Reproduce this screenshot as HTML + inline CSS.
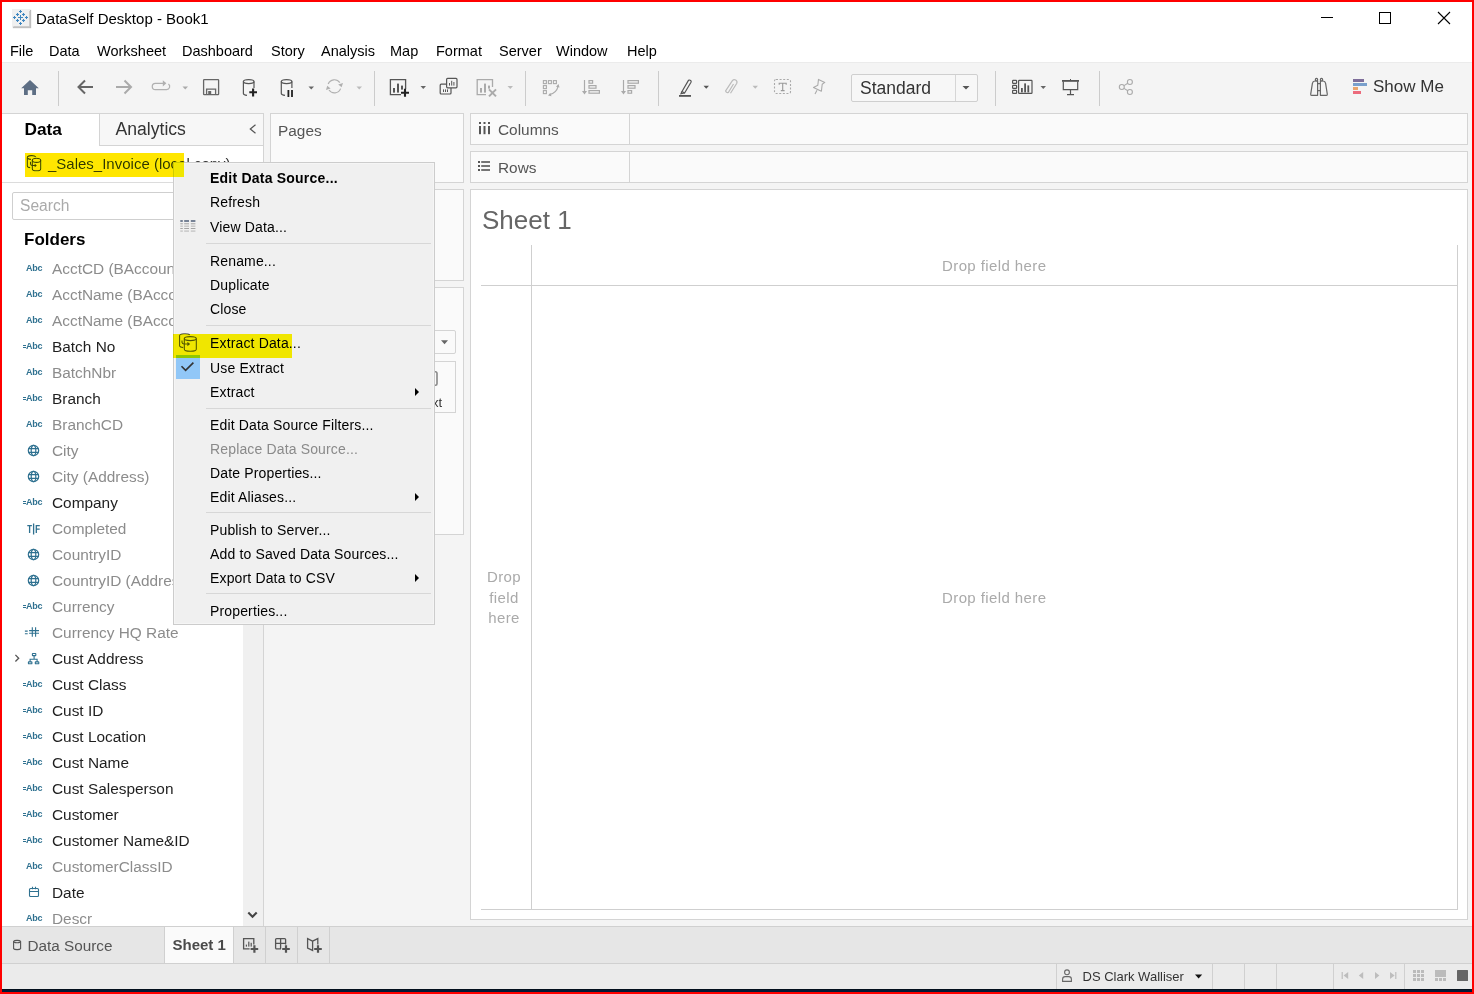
<!DOCTYPE html>
<html><head><meta charset="utf-8">
<style>
*{margin:0;padding:0;box-sizing:border-box}
html,body{width:1474px;height:994px;overflow:hidden;background:#ff0000;font-family:"Liberation Sans",sans-serif}
.a{position:absolute}
.t{position:absolute;white-space:nowrap;line-height:1}
.abc{font-size:9px;font-weight:bold;color:#2f7190;letter-spacing:-0.2px}
.dz{font-size:15px;color:#aaaaaa;letter-spacing:0.4px}
.pn{position:absolute;background:#fafafa;border:1px solid #d4d4d4}
</style></head><body>
<!-- window background -->
<div class="a" style="left:2px;top:2px;width:1470px;height:990px;background:#f4f4f4"></div>
<!-- title + menu -->
<div class="a" style="left:2px;top:2px;width:1470px;height:60px;background:#fff"></div>
<!-- status strip / navy line -->
<div class="a" style="left:2px;top:989px;width:1470px;height:3px;background:#001b37;border-top:1px solid #030f1c"></div>

<!-- TITLEBAR -->
<div class="a" style="left:12px;top:9px;width:18px;height:18px;background:#eeeeee;box-shadow:1px 1px 1px #bbb"></div>
<div class="t" style="left:36px;top:11px;font-size:15px;color:#000">DataSelf Desktop - Book1</div>

<!-- MENU -->
<div class="t" style="left:10px;top:44px;font-size:14.5px;color:#000">File</div>
<div class="t" style="left:49px;top:44px;font-size:14.5px;color:#000">Data</div>
<div class="t" style="left:97px;top:44px;font-size:14.5px;color:#000">Worksheet</div>
<div class="t" style="left:182px;top:44px;font-size:14.5px;color:#000">Dashboard</div>
<div class="t" style="left:271px;top:44px;font-size:14.5px;color:#000">Story</div>
<div class="t" style="left:321px;top:44px;font-size:14.5px;color:#000">Analysis</div>
<div class="t" style="left:390px;top:44px;font-size:14.5px;color:#000">Map</div>
<div class="t" style="left:436px;top:44px;font-size:14.5px;color:#000">Format</div>
<div class="t" style="left:499px;top:44px;font-size:14.5px;color:#000">Server</div>
<div class="t" style="left:556px;top:44px;font-size:14.5px;color:#000">Window</div>
<div class="t" style="left:627px;top:44px;font-size:14.5px;color:#000">Help</div>

<!-- TOOLBAR bg -->
<div class="a" style="left:2px;top:62px;width:1470px;height:52px;background:#f4f4f4;border-top:1px solid #ebebeb"></div>
<!-- Standard dropdown -->
<div class="a" style="left:851px;top:74px;width:127px;height:28px;background:#f7f7f7;border:1px solid #cfcfcf;border-radius:2px"></div>
<div class="a" style="left:955px;top:75px;width:1px;height:26px;background:#d6d6d6"></div>
<div class="t" style="left:860px;top:80px;font-size:17.5px;color:#333">Standard</div>
<div class="t" style="left:1373px;top:78px;font-size:17px;color:#333">Show Me</div>

<!-- TOOLBAR ICONS -->
<svg class="a" style="left:0;top:0" width="1474" height="114" viewBox="0 0 1474 114">
<!-- dividers -->
<g fill="#cccccc">
<rect x="58" y="71" width="1" height="35"/>
<rect x="374" y="71" width="1" height="35"/>
<rect x="525" y="71" width="1" height="35"/>
<rect x="658" y="71" width="1" height="35"/>
<rect x="995" y="71" width="1" height="35"/>
<rect x="1099" y="71" width="1" height="35"/>
</g>
<!-- home -->
<path d="M21.2 88.2L30 80L38.8 88.2H36V95H32.2V90.2H27.8V95H24V88.2Z" fill="#5d6e84"/>
<!-- back -->
<g stroke="#666" stroke-width="2" fill="none"><path d="M78.5 87H93M85 80.5L78.5 87L85 93.5"/></g>
<!-- fwd -->
<g stroke="#aaa" stroke-width="2" fill="none"><path d="M116 87H131M124.5 80.5L131 87L124.5 93.5"/></g>
<!-- redo loop -->
<g stroke="#b0b0b0" stroke-width="1.2" fill="none"><path d="M163 83.3H155.4A3.15 3.15 0 0 0 155.4 89.6H166.6A3.15 3.15 0 0 0 168.4 83.9"/></g><path d="M162.8 80.2L166.4 83.3L162.8 86.5Z" fill="#b0b0b0"/>
<!-- dropdown tris -->
<g fill="#999"><path d="M182.5 86.5h5.5l-2.75 3z" fill="#aaa"/><path d="M308.5 86.5h5.5l-2.75 3z" fill="#666"/><path d="M356.5 86.5h5.5l-2.75 3z" fill="#bbb"/>
<path d="M420.5 86h5.5l-2.75 3z" fill="#666"/><path d="M507.5 86h5.5l-2.75 3z" fill="#bbb"/>
<path d="M703.5 85.8h5.5l-2.75 3z" fill="#555"/><path d="M752.5 85.8h5.5l-2.75 3z" fill="#bbb"/>
<path d="M1040.5 86h5.5l-2.75 3z" fill="#666"/><path d="M962.5 86h7l-3.5 3.6z" fill="#555"/>
</g>
<!-- save -->
<g stroke="#666" stroke-width="1.3" fill="none"><rect x="203.6" y="79.6" width="15" height="15" rx="0.6"/><path d="M206.6 94.6V89.2H215.6V94.6"/></g>
<rect x="208.2" y="91" width="3" height="3.6" fill="#666"/>
<!-- db+ -->
<g stroke="#555" stroke-width="1.2" fill="none"><ellipse cx="248.7" cy="81.6" rx="5.3" ry="2"/><path d="M243.4 81.6V93.4A5.3 2 0 0 0 247 95.3M254 81.6V88"/></g>
<path d="M249.3 92.3H257M253.1 88.4V96.6" stroke="#222" stroke-width="2.1"/>
<!-- db pause -->
<g stroke="#555" stroke-width="1.2" fill="none"><ellipse cx="286.6" cy="81.6" rx="5.3" ry="2"/><path d="M281.3 81.6V93.4A5.3 2 0 0 0 285 95.3M291.9 81.6V88"/></g>
<path d="M288.4 90V97M292 90V97" stroke="#222" stroke-width="1.8"/>
<!-- refresh -->
<g stroke="#b0b0b0" stroke-width="1.2" fill="none"><path d="M328.2 84A6.6 6.6 0 0 1 339.8 82.6"/><path d="M340.6 88.6A6.6 6.6 0 0 1 329 90"/></g>
<g fill="#b0b0b0"><path d="M338.2 84.6L343 83L341.6 87.2Z"/><path d="M326 90L327.2 85.8L330.6 88.4Z"/></g>
<!-- new worksheet -->
<g stroke="#555" stroke-width="1.3" fill="none"><path d="M401 94.6H390.4V79.6H405.6V89"/></g>
<g fill="#555"><rect x="393" y="88" width="2" height="4.6"/><rect x="397" y="83.6" width="2" height="9"/><rect x="401" y="85.6" width="2" height="4"/></g>
<path d="M401 92.8H409M405 88.8V96.8" stroke="#222" stroke-width="2.1"/>
<!-- duplicate -->
<g stroke="#555" stroke-width="1.2" fill="none"><rect x="446.6" y="78.4" width="10.4" height="9.4" rx="1"/><path d="M446 84.2H441.2A1 1 0 0 0 440.2 85.2V93A1 1 0 0 0 441.2 94H450A1 1 0 0 0 451 93V88"/></g>
<g fill="#555"><rect x="449" y="83" width="1" height="2.6"/><rect x="451.2" y="80.8" width="1" height="4.8"/><rect x="453.4" y="82" width="1" height="3.6"/><rect x="443" y="89.4" width="1" height="2.6"/><rect x="445" y="89.4" width="1" height="2.6"/><rect x="447" y="89.4" width="1" height="2.6"/></g>
<!-- clear sheet -->
<g stroke="#aaa" stroke-width="1.3" fill="none"><path d="M486 94.6H477.2V79.6H492.5V87"/></g>
<g fill="#aaa"><rect x="480" y="88" width="2" height="4.6"/><rect x="484" y="83.6" width="2" height="9"/><rect x="488" y="85.6" width="2" height="3"/></g>
<path d="M489 89.4L496 96.4M496 89.4L489 96.4" stroke="#aaa" stroke-width="2"/>
<!-- swap -->
<g stroke="#aaa" stroke-width="1.1" fill="none"><rect x="543.4" y="80.6" width="3" height="3"/><rect x="548.4" y="80.6" width="3" height="3"/><rect x="553.4" y="80.6" width="3" height="3"/><rect x="543.4" y="85.6" width="3" height="3"/><rect x="543.4" y="90.6" width="3" height="3"/><path d="M549.5 94.6Q556.5 93 558 86.6"/></g>
<g fill="#aaa"><path d="M556 86.8L558.5 84L559.5 87.5Z"/><path d="M550.3 93L548 95.6L551.5 96.2Z"/></g>
<!-- sort asc -->
<g stroke="#aaa" stroke-width="1.2" fill="none"><path d="M584.5 80V93"/><rect x="589" y="80.6" width="3.6" height="2.6"/><rect x="589" y="85.6" width="7" height="2.6"/><rect x="589" y="90.6" width="10.4" height="2.6"/></g>
<path d="M582 91L584.5 94.5L587 91Z" fill="#aaa"/>
<!-- sort desc -->
<g stroke="#aaa" stroke-width="1.2" fill="none"><path d="M623.5 80V93"/><rect x="628" y="80.6" width="10.4" height="2.6"/><rect x="628" y="85.6" width="7" height="2.6"/><rect x="628" y="90.6" width="3.6" height="2.6"/></g>
<path d="M621 91L623.5 94.5L626 91Z" fill="#aaa"/>
<!-- highlighter -->
<g stroke="#555" stroke-width="1.2" fill="none"><path d="M682 91.5L688.3 80.6A1.2 1.2 0 0 1 690 80.2L690.6 80.6A1.2 1.2 0 0 1 691 82.2L684.6 93Z"/><path d="M682 91.5L681 93.6L684.6 93"/></g>
<rect x="679" y="95" width="12" height="1.8" fill="#555"/>
<!-- paperclip -->
<g stroke="#bbb" stroke-width="1.2" fill="none"><path d="M733.5 84L728.3 92.5A2 2 0 0 1 725.6 90.8L732.4 80.6A2.6 2.6 0 0 1 736.8 83.2L730.5 93.2"/></g>
<!-- text box -->
<rect x="774.5" y="79.5" width="16" height="14" rx="1.5" fill="none" stroke="#aaa" stroke-width="1.1" stroke-dasharray="2 1.6"/>
<path d="M779.2 84.8V83.2H786.2V84.8M782.7 83.2V90.6M780.8 90.6H784.6" stroke="#999" stroke-width="1.1" fill="none"/>
<!-- pin -->
<g stroke="#aaa" stroke-width="1.1" fill="none" stroke-linejoin="round"><path d="M818.5 79.4L824.8 82.4L822.2 84.3L821.4 91.2L813.5 87.4L817.8 85.3Z"/><path d="M817 90.2L815 94"/></g>
<!-- show cards -->
<g stroke="#555" stroke-width="1.2" fill="none"><rect x="1012.6" y="80.4" width="4" height="3" rx="0.6"/><rect x="1012.6" y="85.4" width="4" height="3" rx="0.6"/><rect x="1012.6" y="90.4" width="4" height="3" rx="0.6"/><rect x="1018.6" y="80.4" width="13.4" height="13" rx="0.6"/></g>
<g fill="#555"><rect x="1021" y="88" width="1.8" height="4.4"/><rect x="1024.2" y="83.4" width="1.8" height="9"/><rect x="1027.4" y="85.4" width="1.8" height="7"/></g>
<!-- presentation -->
<rect x="1062" y="80" width="17" height="1.8" fill="#555"/>
<g stroke="#555" stroke-width="1.2" fill="none"><path d="M1063.3 81.5V89.6H1077.7V81.5M1070.5 89.6V94.6M1067 94.6H1074"/></g>
<rect x="1070" y="79" width="1" height="1.5" fill="#555"/>
<!-- share -->
<g stroke="#aaa" stroke-width="1.1" fill="none"><circle cx="1121.8" cy="87" r="2.5"/><circle cx="1129.9" cy="82" r="2.5"/><circle cx="1129.9" cy="92" r="2.5"/><path d="M1124 85.6L1127.8 83.3M1124 88.4L1127.8 90.7"/></g>
<!-- binoculars -->
<g stroke="#666" stroke-width="1.2" fill="none" stroke-linejoin="round">
<path d="M1317.6 95.3H1311.6Q1310.5 95.3 1310.7 94.2L1312.4 83.4Q1312.8 81.2 1315 81H1317.6Z"/>
<path d="M1320.4 95.3H1326.4Q1327.5 95.3 1327.3 94.2L1325.6 83.4Q1325.2 81.2 1323 81H1320.4Z"/>
<rect x="1315.4" y="78.4" width="2.2" height="2.6" rx="1"/>
<rect x="1320.4" y="78.4" width="2.2" height="2.6" rx="1"/>
<path d="M1317.6 83.6H1320.4M1317.6 90.6H1320.4"/>
</g>
<!-- show me -->
<rect x="1353" y="79" width="11" height="3" fill="#7e6e9a"/>
<rect x="1353" y="83" width="14" height="3" fill="#7aa0cc"/>
<rect x="1353" y="87" width="5" height="3" fill="#eaa56c"/>
<rect x="1353" y="91" width="8" height="3" fill="#ec6b7c"/>
<!-- window controls -->
<rect x="1321" y="17" width="12" height="1" fill="#000"/>
<rect x="1379.5" y="12.5" width="11" height="11" fill="none" stroke="#000" stroke-width="1"/>
<path d="M1438 12L1450 24M1450 12L1438 24" stroke="#000" stroke-width="1.1"/>
</svg>

<!-- PANELS -->
<!-- data pane -->
<div class="a" style="left:2px;top:113px;width:262px;height:813px;background:#fff;border-top:1px solid #d4d4d4;border-right:1px solid #d4d4d4"></div>
<div class="a" style="left:99px;top:113px;width:165px;height:33px;background:#f7f7f7;border:1px solid #d4d4d4;border-right:1px solid #d4d4d4"></div>
<div class="a" style="left:2px;top:182px;width:261px;height:1px;background:#dcdcdc"></div>
<div class="a" style="left:12px;top:192px;width:240px;height:28px;background:#fff;border:1px solid #cfcfcf;border-radius:2px"></div>
<div class="t" style="left:24.5px;top:120.8px;font-size:17.3px;font-weight:bold;color:#000">Data</div>
<div class="t" style="left:115.5px;top:120.9px;font-size:17.6px;color:#333">Analytics</div>
<div class="t" style="left:48px;top:155.6px;font-size:15px;color:#333">_Sales_Invoice (local copy)</div>
<div class="t" style="left:20px;top:197.6px;font-size:15.6px;color:#aaa">Search</div>
<div class="t" style="left:24px;top:231px;font-size:17px;font-weight:bold;color:#000">Folders</div>
<!-- scrollbar -->
<div class="a" style="left:243px;top:183px;width:20px;height:743px;background:#f0f0f0"></div>

<!-- FIELDS -->
<div class="a" style="left:2px;top:250px;width:240px;height:676px;overflow:hidden">
<div class="t" style="left:50px;top:11.3px;font-size:15.4px;color:#8c8c8c">AcctCD (BAccount)</div>
<div class="t abc" style="left:24px;top:14.3px">Abc</div>
<div class="t" style="left:50px;top:37.3px;font-size:15.4px;color:#8c8c8c">AcctName (BAccount)</div>
<div class="t abc" style="left:24px;top:40.3px">Abc</div>
<div class="t" style="left:50px;top:63.3px;font-size:15.4px;color:#8c8c8c">AcctName (BAccount)</div>
<div class="t abc" style="left:24px;top:66.3px">Abc</div>
<div class="t" style="left:50px;top:89.3px;font-size:15.4px;color:#1f1f1f">Batch No</div>
<div class="t abc" style="left:24px;top:92.3px">Abc</div>
<div class="a" style="left:21px;top:94.8px;width:3px;height:1px;background:#2f7190"></div><div class="a" style="left:21px;top:96.8px;width:3px;height:1px;background:#2f7190"></div>
<div class="t" style="left:50px;top:115.3px;font-size:15.4px;color:#8c8c8c">BatchNbr</div>
<div class="t abc" style="left:24px;top:118.3px">Abc</div>
<div class="t" style="left:50px;top:141.3px;font-size:15.4px;color:#1f1f1f">Branch</div>
<div class="t abc" style="left:24px;top:144.3px">Abc</div>
<div class="a" style="left:21px;top:146.8px;width:3px;height:1px;background:#2f7190"></div><div class="a" style="left:21px;top:148.8px;width:3px;height:1px;background:#2f7190"></div>
<div class="t" style="left:50px;top:167.3px;font-size:15.4px;color:#8c8c8c">BranchCD</div>
<div class="t abc" style="left:24px;top:170.3px">Abc</div>
<div class="t" style="left:50px;top:193.3px;font-size:15.4px;color:#8c8c8c">City</div>
<svg class="a" style="left:25px;top:194px" width="14" height="13"><g stroke="#2f7190" stroke-width="1.2" fill="none"><circle cx="6.5" cy="6.5" r="5.2"/><ellipse cx="6.5" cy="6.5" rx="2.3" ry="5.2"/><path d="M1.5 4.6h10M1.5 8.4h10"/></g></svg>
<div class="t" style="left:50px;top:219.3px;font-size:15.4px;color:#8c8c8c">City (Address)</div>
<svg class="a" style="left:25px;top:220px" width="14" height="13"><g stroke="#2f7190" stroke-width="1.2" fill="none"><circle cx="6.5" cy="6.5" r="5.2"/><ellipse cx="6.5" cy="6.5" rx="2.3" ry="5.2"/><path d="M1.5 4.6h10M1.5 8.4h10"/></g></svg>
<div class="t" style="left:50px;top:245.3px;font-size:15.4px;color:#1f1f1f">Company</div>
<div class="t abc" style="left:24px;top:248.3px">Abc</div>
<div class="a" style="left:21px;top:250.8px;width:3px;height:1px;background:#2f7190"></div><div class="a" style="left:21px;top:252.8px;width:3px;height:1px;background:#2f7190"></div>
<div class="t" style="left:50px;top:271.3px;font-size:15.4px;color:#8c8c8c">Completed</div>
<svg class="a" style="left:22px;top:272px" width="20" height="14"><g stroke="#2f7190" stroke-width="1.3" fill="none"><path d="M3.3 3.6h4.6M5.6 3.6V11M9.6 1.5V12.5M12.3 3V11M11.7 3.6h4.1M12.3 7.2h3.4"/></g></svg>
<div class="t" style="left:50px;top:297.3px;font-size:15.4px;color:#8c8c8c">CountryID</div>
<svg class="a" style="left:25px;top:298px" width="14" height="13"><g stroke="#2f7190" stroke-width="1.2" fill="none"><circle cx="6.5" cy="6.5" r="5.2"/><ellipse cx="6.5" cy="6.5" rx="2.3" ry="5.2"/><path d="M1.5 4.6h10M1.5 8.4h10"/></g></svg>
<div class="t" style="left:50px;top:323.3px;font-size:15.4px;color:#8c8c8c">CountryID (Address)</div>
<svg class="a" style="left:25px;top:324px" width="14" height="13"><g stroke="#2f7190" stroke-width="1.2" fill="none"><circle cx="6.5" cy="6.5" r="5.2"/><ellipse cx="6.5" cy="6.5" rx="2.3" ry="5.2"/><path d="M1.5 4.6h10M1.5 8.4h10"/></g></svg>
<div class="t" style="left:50px;top:349.3px;font-size:15.4px;color:#8c8c8c">Currency</div>
<div class="t abc" style="left:24px;top:352.3px">Abc</div>
<div class="a" style="left:21px;top:354.8px;width:3px;height:1px;background:#2f7190"></div><div class="a" style="left:21px;top:356.8px;width:3px;height:1px;background:#2f7190"></div>
<div class="t" style="left:50px;top:375.3px;font-size:15.4px;color:#8c8c8c">Currency HQ Rate</div>
<svg class="a" style="left:20px;top:376px" width="20" height="12"><g stroke="#2f7190" stroke-width="1.1" fill="none"><path d="M2.9 5.1h2.8M2.9 7.7h2.8M7.1 4.6h9.9M7.1 7.3h9.9M10.3 1.2v9.6M13.6 1.2v9.6"/></g></svg>
<div class="t" style="left:50px;top:401.3px;font-size:15.4px;color:#1f1f1f">Cust Address</div>
<svg class="a" style="left:10.2px;top:402px" width="30" height="13"><path d="M3.4 2.9l3.3 3.3-3.3 3.3" stroke="#555" stroke-width="1.3" fill="none"/><g stroke="#2f7190" stroke-width="1.1" fill="none"><rect x="20.4" y="1.5" width="3.4" height="2.1" rx="0.4"/><rect x="16.4" y="9.9" width="3.5" height="1.9" rx="0.4"/><rect x="23.3" y="9.9" width="3.5" height="1.9" rx="0.4"/><path d="M22.1 3.6v3.6M18.1 9.9v-2.7h7v2.7"/></g></svg>
<div class="t" style="left:50px;top:427.3px;font-size:15.4px;color:#1f1f1f">Cust Class</div>
<div class="t abc" style="left:24px;top:430.3px">Abc</div>
<div class="a" style="left:21px;top:432.8px;width:3px;height:1px;background:#2f7190"></div><div class="a" style="left:21px;top:434.8px;width:3px;height:1px;background:#2f7190"></div>
<div class="t" style="left:50px;top:453.3px;font-size:15.4px;color:#1f1f1f">Cust ID</div>
<div class="t abc" style="left:24px;top:456.3px">Abc</div>
<div class="a" style="left:21px;top:458.8px;width:3px;height:1px;background:#2f7190"></div><div class="a" style="left:21px;top:460.8px;width:3px;height:1px;background:#2f7190"></div>
<div class="t" style="left:50px;top:479.3px;font-size:15.4px;color:#1f1f1f">Cust Location</div>
<div class="t abc" style="left:24px;top:482.3px">Abc</div>
<div class="a" style="left:21px;top:484.8px;width:3px;height:1px;background:#2f7190"></div><div class="a" style="left:21px;top:486.8px;width:3px;height:1px;background:#2f7190"></div>
<div class="t" style="left:50px;top:505.3px;font-size:15.4px;color:#1f1f1f">Cust Name</div>
<div class="t abc" style="left:24px;top:508.3px">Abc</div>
<div class="a" style="left:21px;top:510.8px;width:3px;height:1px;background:#2f7190"></div><div class="a" style="left:21px;top:512.8px;width:3px;height:1px;background:#2f7190"></div>
<div class="t" style="left:50px;top:531.3px;font-size:15.4px;color:#1f1f1f">Cust Salesperson</div>
<div class="t abc" style="left:24px;top:534.3px">Abc</div>
<div class="a" style="left:21px;top:536.8px;width:3px;height:1px;background:#2f7190"></div><div class="a" style="left:21px;top:538.8px;width:3px;height:1px;background:#2f7190"></div>
<div class="t" style="left:50px;top:557.3px;font-size:15.4px;color:#1f1f1f">Customer</div>
<div class="t abc" style="left:24px;top:560.3px">Abc</div>
<div class="a" style="left:21px;top:562.8px;width:3px;height:1px;background:#2f7190"></div><div class="a" style="left:21px;top:564.8px;width:3px;height:1px;background:#2f7190"></div>
<div class="t" style="left:50px;top:583.3px;font-size:15.4px;color:#1f1f1f">Customer Name&amp;ID</div>
<div class="t abc" style="left:24px;top:586.3px">Abc</div>
<div class="a" style="left:21px;top:588.8px;width:3px;height:1px;background:#2f7190"></div><div class="a" style="left:21px;top:590.8px;width:3px;height:1px;background:#2f7190"></div>
<div class="t" style="left:50px;top:609.3px;font-size:15.4px;color:#8c8c8c">CustomerClassID</div>
<div class="t abc" style="left:24px;top:612.3px">Abc</div>
<div class="t" style="left:50px;top:635.3px;font-size:15.4px;color:#1f1f1f">Date</div>
<svg class="a" style="left:26px;top:636px" width="12" height="12"><g stroke="#2f7190" stroke-width="1.1" fill="none"><rect x="1.5" y="2.5" width="9" height="8" rx="1"/><path d="M1.5 5.5h9M4.5 0.8v2.5M7.5 0.8v2.5"/></g></svg>
<div class="t" style="left:50px;top:661.3px;font-size:15.4px;color:#8c8c8c">Descr</div>
<div class="t abc" style="left:24px;top:664.3px">Abc</div>
</div>
<!-- Pages / Filters / Marks -->
<div class="pn" style="left:270px;top:113px;width:194px;height:70px"></div>
<div class="t" style="left:278px;top:123px;font-size:15.4px;color:#555">Pages</div>
<div class="pn" style="left:270px;top:189px;width:194px;height:92px"></div>
<div class="pn" style="left:270px;top:287px;width:194px;height:248px"></div>
<div class="a" style="left:278px;top:330px;width:178px;height:24px;background:#fafafa;border:1px solid #d4d4d4;border-radius:2px"></div>
<div class="a" style="left:278px;top:361px;width:178px;height:52px;background:#fafafa;border:1px solid #d4d4d4"></div>

<div class="t" style="left:382px;width:60px;text-align:right;top:396px;font-size:13px;color:#333">Text</div>
<svg class="a" style="left:420px;top:367.6px" width="20" height="20"><path d="M10 3.8H15.5A1.5 1.5 0 0 1 17 5.3V15.7A1.5 1.5 0 0 1 15.5 17.2H10" stroke="#888" stroke-width="1.6" fill="none"/></svg>
<!-- shelves -->
<div class="pn" style="left:470px;top:113px;width:998px;height:32px"></div>
<div class="a" style="left:629px;top:114px;width:1px;height:30px;background:#d4d4d4"></div>
<div class="t" style="left:498px;top:122px;font-size:15.4px;color:#555">Columns</div>
<div class="pn" style="left:470px;top:151px;width:998px;height:32px"></div>
<div class="a" style="left:629px;top:152px;width:1px;height:30px;background:#d4d4d4"></div>
<div class="t" style="left:498px;top:160px;font-size:15.4px;color:#555">Rows</div>

<!-- sheet -->
<div class="a" style="left:470px;top:189px;width:998px;height:731px;background:#fff;border:1px solid #d4d4d4"></div>
<div class="t" style="left:482px;top:206.6px;font-size:26px;color:#666">Sheet 1</div>
<div class="a" style="left:531px;top:245px;width:1px;height:665px;background:#cfcfcf"></div>
<div class="a" style="left:1457px;top:245px;width:1px;height:665px;background:#cfcfcf"></div>
<div class="a" style="left:481px;top:285px;width:977px;height:1px;background:#cfcfcf"></div>
<div class="a" style="left:481px;top:909px;width:977px;height:1px;background:#cfcfcf"></div>
<div class="t dz" style="left:942px;top:258.2px">Drop field here</div>
<div class="t dz" style="left:942px;top:589.9px">Drop field here</div>
<div class="t dz" style="left:474px;width:60px;text-align:center;top:569px">Drop</div><div class="t dz" style="left:474px;width:60px;text-align:center;top:589.9px">field</div><div class="t dz" style="left:474px;width:60px;text-align:center;top:609.8px">here</div>

<!-- TAB BAR -->
<div class="a" style="left:2px;top:926px;width:1470px;height:37px;background:#e6e6e6;border-top:1px solid #d0d0d0"></div>
<div class="a" style="left:164px;top:927px;width:70px;height:36px;background:#fafafa;border-left:1px solid #d0d0d0;border-right:1px solid #d0d0d0"></div>
<div class="a" style="left:265px;top:927px;width:1px;height:36px;background:#d0d0d0"></div>
<div class="a" style="left:297px;top:927px;width:1px;height:36px;background:#d0d0d0"></div>
<div class="a" style="left:329px;top:927px;width:1px;height:36px;background:#d0d0d0"></div>
<div class="t" style="left:27.5px;top:937.6px;font-size:15.3px;color:#555">Data Source</div>
<div class="t" style="left:172.5px;top:937px;font-size:15px;font-weight:bold;color:#4a4a4a">Sheet 1</div>

<!-- STATUS BAR -->
<div class="a" style="left:2px;top:963px;width:1470px;height:26px;background:#ebebeb;border-top:1px solid #d0d0d0"></div>
<div class="t" style="left:1082.5px;top:970px;font-size:13px;color:#333">DS Clark Walliser</div>

<!-- MISC ICONS -->
<svg class="a" style="left:0;top:0" width="1474" height="994" viewBox="0 0 1474 994">
<!-- title app icon -->
<rect x="13.4" y="11" width="17" height="16.6" fill="#c4c4c4"/>
<rect x="12.2" y="9.6" width="17" height="16.6" fill="#f0f0f0"/>
<g stroke="#3f87c0" fill="none">
<path d="M20.5 15V20M18 17.5H23" stroke-width="1"/>
<path d="M20.5 10V13M19 11.5H22M20.5 22V25M19 23.5H22M13 17.5H16M14.5 16V19M25 17.5H28M26.5 16V19" stroke-width="1"/>
<path d="M17.5 13V16M16 14.5H19M23.5 13V16M22 14.5H25M17.5 19V22M16 20.5H19M23.5 19V22M22 20.5H25" stroke-width="1.1"/>
</g>
<!-- datasource icon -->
<g stroke="#444" stroke-width="1.1" fill="none">
<path d="M35.8 157A4.3 1.8 0 0 0 27.3 157.4V165.9A4.3 1.8 0 0 0 30.2 167.6"/>
<path d="M27.6 158.2Q29 159.3 31 159.4"/>
<ellipse cx="36.5" cy="160.3" rx="4.2" ry="2.1"/>
<path d="M32.3 160.3V168.7A4.2 2.1 0 0 0 40.7 168.7V160.3"/>
<path d="M30.5 161.8V164Q30.7 165.5 32.3 165.5H35"/>
</g>
<path d="M34.6 163.5L36.8 165.5L34.6 167.5Z" fill="#444"/>
<!-- analytics chevron -->
<path d="M255.5 124.8L250.3 129L255.5 133.2" stroke="#555" stroke-width="1.2" fill="none"/>
<!-- columns / rows icons -->
<g fill="#555">
<rect x="479" y="122" width="2" height="2"/><rect x="483.5" y="122" width="2" height="2"/><rect x="488" y="122" width="2" height="2"/>
<rect x="479" y="126" width="2" height="8.2"/><rect x="483.5" y="126" width="2" height="8.2"/><rect x="488" y="126" width="2" height="8.2"/>
<rect x="478" y="161" width="2" height="2"/><rect x="478" y="165" width="2" height="2"/><rect x="478" y="169" width="2" height="2"/>
<rect x="481.2" y="161.2" width="8.8" height="1.6"/><rect x="481.2" y="165.2" width="8.8" height="1.6"/><rect x="481.2" y="169.2" width="8.8" height="1.6"/>
</g>
<!-- marks dropdown arrow -->
<path d="M441 340.2H448L444.5 344.2Z" fill="#666"/>
<!-- scroll chevron -->
<path d="M248.3 912.6L252.5 916.8L256.7 912.6" stroke="#444" stroke-width="2.1" fill="none"/>
<!-- tab bar icons -->
<g stroke="#555" stroke-width="1.1" fill="none">
<path d="M13.6 941.4A3.6 1.3 0 0 1 20.6 941.4V948.6A3.6 1.3 0 0 1 13.6 948.6Z"/><path d="M13.6 942Q17.1 943.6 20.6 942"/>
</g>
<g stroke="#555" stroke-width="1.3" fill="none">
<path d="M249.6 948.8H243.6V938.6H253.8V944.4"/>
<path d="M275.6 948.8V939.6A1 1 0 0 1 276.6 938.6H284.6A1 1 0 0 1 285.6 939.6V944.4M275.6 943.4H285.6M280.6 938.6V948.8M275.6 948.8H281"/>
<path d="M307.6 938.6V948.2L312.6 950.4V941.2ZM312.6 941.2L317.8 938.6V944.4"/>
</g>
<g fill="#555"><rect x="245.8" y="944.6" width="1.2" height="2"/><rect x="248.2" y="941.6" width="1.2" height="5"/><rect x="250.6" y="942.8" width="1.2" height="3.8"/></g>
<path d="M250.6 949H258.2M254.4 945.2V952.8M282.2 949H289.8M286 945.2V952.8M314.2 949H321.8M318 945.2V952.8" stroke="#555" stroke-width="2.2"/>
<!-- status bar -->
<g fill="#d0d0d0"><rect x="1056" y="964" width="1" height="25"/><rect x="1212" y="964" width="1" height="25"/><rect x="1244" y="964" width="1" height="25"/><rect x="1276" y="964" width="1" height="25"/><rect x="1333" y="964" width="1" height="25"/><rect x="1404" y="964" width="1" height="25"/></g>
<g stroke="#666" stroke-width="1.1" fill="none"><circle cx="1067" cy="972.3" r="2.4"/><path d="M1062.6 981.4V979.2A2.6 2.6 0 0 1 1065.2 976.6H1068.8A2.6 2.6 0 0 1 1071.4 979.2V981.4Z"/></g>
<path d="M1195 974.4H1202.2L1198.6 978.4Z" fill="#111"/>
<g fill="#bdbdbd">
<rect x="1341.6" y="972" width="1.2" height="7"/><path d="M1348.2 972L1343.6 975.5L1348.2 979Z"/>
<path d="M1363.2 972L1358.8 975.5L1363.2 979Z"/>
<path d="M1375 972L1379.4 975.5L1375 979Z"/>
<path d="M1390 972L1394.6 975.5L1390 979Z"/><rect x="1395.2" y="972" width="1.2" height="7"/>
</g>
<g fill="#bbbbbb">
<rect x="1413" y="970" width="3" height="3"/><rect x="1417" y="970" width="3" height="3"/><rect x="1421" y="970" width="3" height="3"/>
<rect x="1413" y="974" width="3" height="3"/><rect x="1417" y="974" width="3" height="3"/><rect x="1421" y="974" width="3" height="3"/>
<rect x="1413" y="978" width="3" height="3"/><rect x="1417" y="978" width="3" height="3"/><rect x="1421" y="978" width="3" height="3"/>
<rect x="1435" y="970" width="11" height="7"/><rect x="1435" y="978" width="3" height="3"/><rect x="1439" y="978" width="3" height="3"/><rect x="1443" y="978" width="3" height="3"/>
</g>
<rect x="1457" y="970" width="11" height="11" rx="0.5" fill="#666"/>
</svg>

<!-- CONTEXT MENU -->
<div class="a" style="left:173px;top:162px;width:262px;height:463px;background:#f0f0f0;border:1px solid #cccccc;box-shadow:inset 0 0 0 1px #f5f5f5"></div>
<div class="a" style="left:206px;top:243px;width:225px;height:1px;background:#d7d7d7"></div>
<div class="a" style="left:206px;top:325px;width:225px;height:1px;background:#d7d7d7"></div>
<div class="a" style="left:206px;top:408px;width:225px;height:1px;background:#d7d7d7"></div>
<div class="a" style="left:206px;top:512px;width:225px;height:1px;background:#d7d7d7"></div>
<div class="a" style="left:206px;top:593px;width:225px;height:1px;background:#d7d7d7"></div>
<div class="t" style="left:210px;top:171.1px;font-size:14px;color:#000;letter-spacing:0.22px;font-weight:bold">Edit Data Source...</div>
<div class="t" style="left:210px;top:195.1px;font-size:14px;color:#000;letter-spacing:0.15px">Refresh</div>
<div class="t" style="left:210px;top:220.1px;font-size:14px;color:#000;letter-spacing:0.15px">View Data...</div>
<div class="t" style="left:210px;top:254.1px;font-size:14px;color:#000;letter-spacing:0.15px">Rename...</div>
<div class="t" style="left:210px;top:278.1px;font-size:14px;color:#000;letter-spacing:0.15px">Duplicate</div>
<div class="t" style="left:210px;top:302.1px;font-size:14px;color:#000;letter-spacing:0.15px">Close</div>
<div class="t" style="left:210px;top:336.1px;font-size:14px;color:#000;letter-spacing:0.15px">Extract Data...</div>
<div class="t" style="left:210px;top:360.7px;font-size:14px;color:#000;letter-spacing:0.15px">Use Extract</div>
<div class="t" style="left:210px;top:385.1px;font-size:14px;color:#000;letter-spacing:0.15px">Extract</div>
<div class="a" style="left:415px;top:388.0px;width:0;height:0;border-top:4px solid transparent;border-bottom:4px solid transparent;border-left:4px solid #000"></div>
<div class="t" style="left:210px;top:417.6px;font-size:14px;color:#000;letter-spacing:0.15px">Edit Data Source Filters...</div>
<div class="t" style="left:210px;top:441.7px;font-size:14px;color:#8a8a8a;letter-spacing:0.15px">Replace Data Source...</div>
<div class="t" style="left:210px;top:465.6px;font-size:14px;color:#000;letter-spacing:0.15px">Date Properties...</div>
<div class="t" style="left:210px;top:489.8px;font-size:14px;color:#000;letter-spacing:0.15px">Edit Aliases...</div>
<div class="a" style="left:415px;top:492.7px;width:0;height:0;border-top:4px solid transparent;border-bottom:4px solid transparent;border-left:4px solid #000"></div>
<div class="t" style="left:210px;top:522.8px;font-size:14px;color:#000;letter-spacing:0.15px">Publish to Server...</div>
<div class="t" style="left:210px;top:546.9px;font-size:14px;color:#000;letter-spacing:0.15px">Add to Saved Data Sources...</div>
<div class="t" style="left:210px;top:570.9px;font-size:14px;color:#000;letter-spacing:0.15px">Export Data to CSV</div>
<div class="a" style="left:415px;top:573.8px;width:0;height:0;border-top:4px solid transparent;border-bottom:4px solid transparent;border-left:4px solid #000"></div>
<div class="t" style="left:210px;top:603.6px;font-size:14px;color:#000;letter-spacing:0.15px">Properties...</div>
<div class="a" style="left:176px;top:355px;width:24px;height:24px;background:#91c7f7"></div>
<svg class="a" style="left:0;top:0" width="1474" height="994" viewBox="0 0 1474 994">
<!-- view data grid -->
<g fill="#768296"><rect x="180.3" y="220" width="2.5" height="2"/><rect x="184.2" y="220" width="4.8" height="2"/><rect x="190.8" y="220" width="4.6" height="2"/></g>
<g fill="#a3a3a3"><rect x="180.3" y="223.3" width="2.5" height="1"/><rect x="184.2" y="223.3" width="4.8" height="1"/><rect x="190.8" y="223.3" width="4.6" height="1"/>
<rect x="180.3" y="228" width="2.5" height="1"/><rect x="184.2" y="228" width="4.8" height="1"/><rect x="190.8" y="228" width="4.6" height="1"/></g>
<g fill="#cacaca"><rect x="180.3" y="225.4" width="2.5" height="1.6"/><rect x="184.2" y="225.4" width="4.8" height="1.6"/><rect x="190.8" y="225.4" width="4.6" height="1.6"/>
<rect x="180.3" y="230.3" width="2.5" height="1.6"/><rect x="184.2" y="230.3" width="4.8" height="1.6"/><rect x="190.8" y="230.3" width="4.6" height="1.6"/></g>
<!-- extract data icon -->
<g stroke="#555" stroke-width="1.1" fill="none">
<path d="M189.8 334.8A5.4 1.9 0 0 0 179.6 335.6V346A5.4 1.9 0 0 0 183.2 347.6"/>
<ellipse cx="190.3" cy="338.6" rx="6" ry="2"/>
<path d="M184.3 338.6V349.2A6 2 0 0 0 196.3 349.2V338.6"/>
<path d="M182 340.4V342.4Q182.3 344 184 344H188"/>
</g>
<path d="M187.4 341.8L190.2 344L187.4 346.2Z" fill="#555"/>
<!-- checkmark -->
<path d="M181.5 366.2L185.6 370.4L193.4 362.6" stroke="#333" stroke-width="1.6" fill="none"/>
</svg>

<!-- highlights -->
<div class="a" style="left:25px;top:153px;width:159px;height:24px;background:#ffe600;mix-blend-mode:darken"></div>
<div class="a" style="left:173px;top:334px;width:119px;height:24px;background:#ffe600;mix-blend-mode:darken"></div>
</body></html>
